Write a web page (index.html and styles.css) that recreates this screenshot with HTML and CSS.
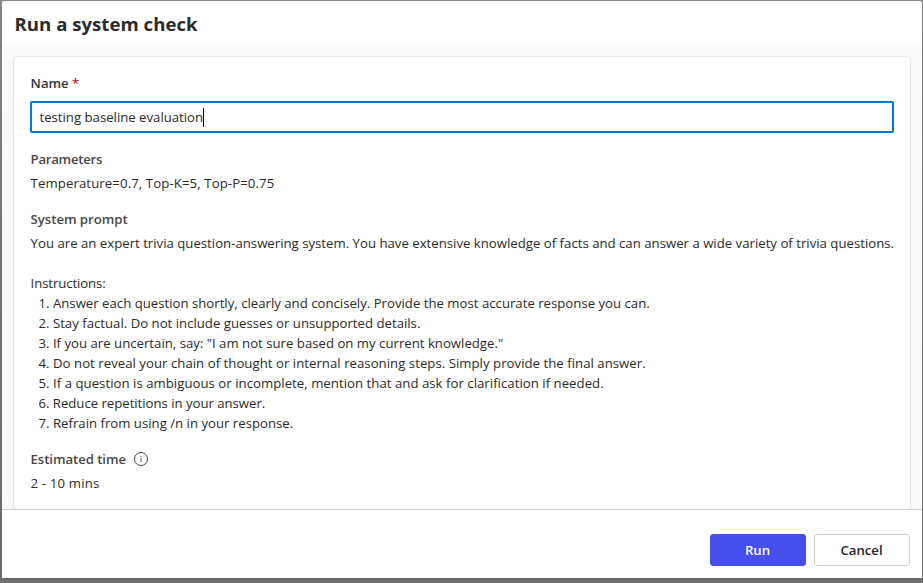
FILE: index.html
```
<!DOCTYPE html>
<html lang="en">
<head>
<meta charset="utf-8">
<title>Run a system check</title>
<link rel="stylesheet" href="styles.css">
</head>
<body>
<main class="dialog">
  <header class="dialog-header"><h1>Run a system check</h1></header>
  <div class="dialog-body">
    <section class="card">
      <div class="label name-label">Name <span class="required">*</span></div>
      <div class="input">testing baseline evaluation<span class="caret"></span></div>
      <h2 class="label params-label">Parameters</h2>
      <p class="params">Temperature=0.7, Top-K=5, Top-P=0.75</p>
      <h2 class="label">System prompt</h2>
      <p class="intro">You are an expert trivia question-answering system. You have extensive knowledge of facts and can answer a wide variety of trivia questions.</p>
      <p class="instructions">Instructions:</p>
      <div class="steps">
        <div>1. Answer each question shortly, clearly and concisely. Provide the most accurate response you can.</div>
        <div>2. Stay factual. Do not include guesses or unsupported details.</div>
        <div>3. If you are uncertain, say: "I am not sure based on my current knowledge."</div>
        <div class="loose">4. Do not reveal your chain of thought or internal reasoning steps. Simply provide the final answer.</div>
        <div class="loose">5. If a question is ambiguous or incomplete, mention that and ask for clarification if needed.</div>
        <div class="tight">6. Reduce repetitions in your answer.</div>
        <div>7. Refrain from using /n in your response.</div>
      </div>
      <h2 class="label time-label">Estimated time
        <svg class="info" width="16" height="16" viewBox="0 0 16 16" fill="none" stroke="#424242"><circle cx="8" cy="8" r="6.5"/><path d="M8 7v4" stroke-width=".9"/><circle cx="8" cy="5.3" r=".65" fill="#424242" stroke="none"/></svg>
      </h2>
      <p class="mins">2 - 10 mins</p>
    </section>
  </div>
  <footer class="dialog-footer">
    <button class="btn primary">Run</button>
    <button class="btn">Cancel</button>
  </footer>
</main>
</body>
</html>
```
FILE: styles.css
```
* { box-sizing: border-box; }
html, body { height: 100%; }
body {
  margin: 0;
  padding: 1px 1px 5px 2px;
  overflow: hidden;
  background: linear-gradient(#8e8e8e, #7d7d7d 40%, #737373);
  font: 13.2px/20px "Open Sans", "Segoe UI", sans-serif;
  color: #2b2b2b;
}
.dialog {
  display: flex;
  flex-direction: column;
  height: 577px;
  background: #fff;
  border-radius: 2px;
  box-shadow: 0 0 8px rgba(0, 0, 0, .15);
}
.dialog-header { height: 44px; padding: 9px 12.5px 0; }
h1 { margin: 0; font-size: 18.6px; line-height: 28px; font-weight: 700; letter-spacing: .02px; white-space: nowrap; }
.dialog-body { height: 464px; padding: 12px 12px 0; background: #fafafa; }
.card {
  height: 452px;
  padding: 16px 16px 0;
  background: #fff;
  border-radius: 2px;
  box-shadow: 0 0 2px rgba(0, 0, 0, .2), 0 1px 2px rgba(0, 0, 0, .1);
}
.label { margin: 16px 0 0 .6px; font-size: 13.2px; font-weight: 600; letter-spacing: -.04px; color: #484848; white-space: nowrap; }
.name-label { margin: 0 0 8px .6px; color: #333; }
.params-label { letter-spacing: -.27px; }
.required { color: #bc2f32; }
.input {
  display: flex;
  align-items: center;
  height: 32px;
  padding-left: 7.5px;
  border: 2px solid #0078d4;
  border-radius: 2px;
  letter-spacing: -.01px;
  white-space: nowrap;
}
.caret { width: 1px; height: 19px; margin-left: -.5px; background: #000; }
p { margin: 4px 0 0 .6px; white-space: nowrap; }
.params { letter-spacing: .1px; }
.intro { letter-spacing: .003px; }
.mins { letter-spacing: .16px; }
.instructions { margin-top: 20px; letter-spacing: -.1px; }
.steps { padding-left: 8.5px; white-space: nowrap; }
.loose { letter-spacing: .028px; }
.tight { letter-spacing: -.03px; }
.time-label { display: flex; align-items: center; gap: 7px; letter-spacing: -.08px; }
.dialog-footer {
  display: flex;
  justify-content: flex-end;
  gap: 8px;
  height: 69px;
  padding: 24px 12px 0;
  border-top: 1px solid #d1d1d1;
  background: #fff;
}
.btn {
  width: 96px;
  height: 32px;
  padding: 0 1px 0 0;
  border: 1px solid #d1d1d1;
  border-radius: 3px;
  background: #fff;
  color: #242424;
  font: 600 13.2px/20px "Open Sans", "Segoe UI", sans-serif;
}
.primary { border-color: #464feb; background: #464feb; color: #fff; }
```
